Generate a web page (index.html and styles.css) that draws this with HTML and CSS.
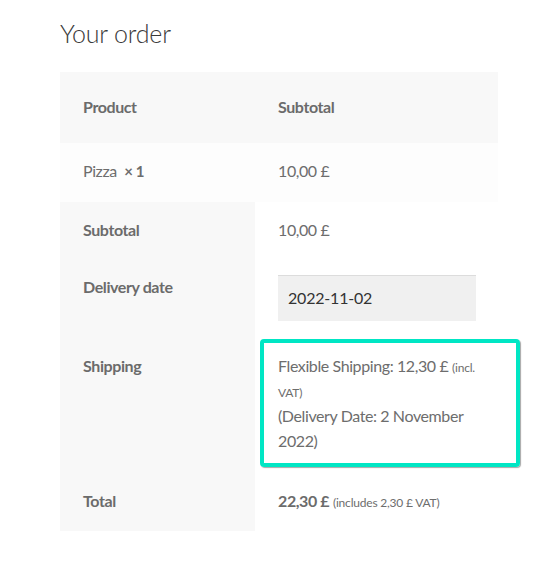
FILE: index.html
```html
<!DOCTYPE html>
<html>
<head>
<meta charset="utf-8">
<link rel="stylesheet" href="styles.css">
</head>
<body>
<div class="wrap">
  <h3 class="title">Your order</h3>
  <table class="order">
    <thead>
      <tr class="head-row">
        <th class="c1">Product</th>
        <th class="c2">Subtotal</th>
      </tr>
    </thead>
    <tbody>
      <tr class="item-row">
        <td class="c1">Pizza&nbsp; <strong class="qty">×&nbsp;1</strong></td>
        <td class="c2">10,00&nbsp;£</td>
      </tr>
    </tbody>
    <tfoot>
      <tr class="foot-row sub-row">
        <th class="c1 label">Subtotal</th>
        <td class="c2">10,00&nbsp;£</td>
      </tr>
      <tr class="foot-row date-row">
        <th class="c1 label">Delivery date</th>
        <td class="c2"><div class="date-input">2022-11-02</div></td>
      </tr>
      <tr class="foot-row ship-row">
        <th class="c1 label">Shipping</th>
        <td class="c2 ship-cell">
          <div class="ship-text">Flexible Shipping: 12,30&nbsp;£ <small class="tax">(incl. VAT)</small><br>(Delivery Date: 2 November 2022)</div>
          <div class="highlight"></div>
        </td>
      </tr>
      <tr class="foot-row total-row">
        <th class="c1 label">Total</th>
        <td class="c2"><strong class="total">22,30&nbsp;£</strong> <small class="tax">(includes 2,30&nbsp;£ VAT)</small></td>
      </tr>
    </tfoot>
  </table>
</div>
</body>
</html>
```
FILE: styles.css
```css
html, body {
  margin: 0;
  padding: 0;
  background: #ffffff;
}
body {
  font-family: "Lato", "Source Sans Pro", "Open Sans", sans-serif;
  font-size: 16px;
  letter-spacing: -0.4px;
  color: #6d6d6d;
}
.wrap {
  padding: 15px 0 0 60px;
}
.title {
  margin: 0 0 21px 0;
  font-size: 25px;
  font-weight: 300;
  line-height: 36px;
  letter-spacing: -0.2px;
  color: #3a3a3a;
}
.order {
  border-collapse: collapse;
  width: 438px;
  table-layout: fixed;
}
.order th, .order td {
  text-align: left;
  vertical-align: top;
  line-height: 25px;
  padding: 16px 22px 16px 23px;
}
.c1 { width: 150px; }
.order th {
  font-weight: 700;
  color: #6b6b6b;
}
.head-row th {
  background: #f8f8f8;
  padding-top: 22px;
  padding-bottom: 24px;
}
.item-row td {
  background: #fdfdfd;
  padding-top: 15px;
  padding-bottom: 18px;
}
.qty {
  font-weight: 700;
  font-size: 15px;
}
.foot-row .label {
  background: #f8f8f8;
}
.foot-row td {
  background: #ffffff;
}
.sub-row th, .sub-row td {
  padding-top: 15px;
  padding-bottom: 16px;
}
.date-row th, .date-row td {
  padding-top: 16px;
  padding-bottom: 16px;
}
.date-input {
  margin-top: 1px;
  height: 46px;
  box-sizing: border-box;
  background: #f0f0f0;
  border-top: 1px solid #dcdcdc;
  padding: 10px 10px;
  color: #333333;
  line-height: 24px;
  font-size: 16px;
  letter-spacing: -0.2px;
}
.ship-row th, .ship-row td {
  padding-top: 16px;
  padding-bottom: 19px;
}
.ship-cell {
  position: relative;
}
.ship-text {
  position: relative;
  z-index: 1;
}
.tax {
  font-size: 12px;
  line-height: 1;
  letter-spacing: -0.2px;
}
.highlight {
  position: absolute;
  left: 5px;
  top: 2px;
  right: -22px;
  bottom: 5px;
  border: 4px solid #00e6c4;
  border-radius: 4px;
  box-shadow: 1px 1px 1px rgba(0, 0, 0, 0.35);
  pointer-events: none;
}
.total-row th, .total-row td {
  padding-top: 16px;
  padding-bottom: 18px;
}
.total {
  font-weight: 700;
  color: #6b6b6b;
}
```
